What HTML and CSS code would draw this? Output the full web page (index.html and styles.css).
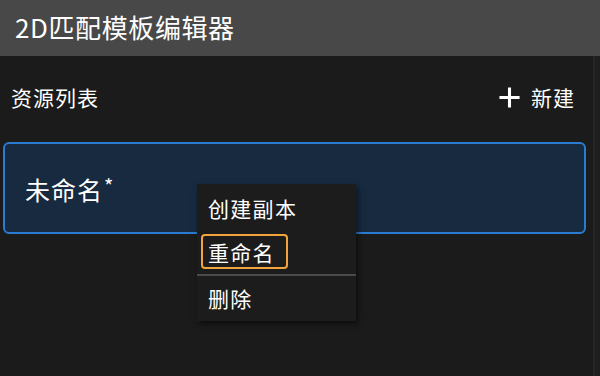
FILE: index.html
```html
<!DOCTYPE html>
<html lang="zh-CN">
<head>
<meta charset="utf-8">
<title>2D匹配模板编辑器</title>
<link rel="stylesheet" href="styles.css">
</head>
<body>
<div class="app">
  <header class="titlebar">2D匹配模板编辑器</header>
  <div class="content">
    <main class="panel">
      <div class="panel-head">
        <span class="panel-title">资源列表</span>
        <div class="new-btn">
          <svg class="plus" viewBox="0 0 24 24" width="23" height="23" aria-hidden="true">
            <path d="M12 1.5v21M1.5 12h21" stroke="#ffffff" stroke-width="3.2" fill="none"/>
          </svg>
          <span>新建</span>
        </div>
      </div>
      <div class="list">
        <div class="item selected">未命名<span class="star">*</span></div>
      </div>
    </main>
    <div class="scrollbar"></div>
  </div>
  <div class="menu">
    <div class="menu-item">创建副本</div>
    <div class="menu-item focused"><span class="focus-box">重命名</span></div>
    <div class="menu-sep"></div>
    <div class="menu-item">删除</div>
  </div>
</div>
</body>
</html>
```
FILE: styles.css
```css
html, body {
  margin: 0;
  padding: 0;
  background: #1b1b1b;
}
body {
  width: 600px;
  height: 376px;
  overflow: hidden;
  font-family: "Noto Sans CJK SC", "Noto Sans", sans-serif;
  color: #ffffff;
}
.app {
  position: relative;
  width: 600px;
  height: 376px;
  display: flex;
  flex-direction: column;
}
.titlebar {
  height: 56px;
  line-height: 54px;
  background: #484848;
  padding-left: 15px;
  font-size: 26px;
  letter-spacing: 0.6px;
  color: #ffffff;
  flex: none;
}
.content {
  flex: 1;
  display: flex;
}
.panel {
  width: 593px;
  display: flex;
  flex-direction: column;
}
.scrollbar {
  flex: 1;
  border-left: 2px solid #262626;
  background: #1e1e1e;
}
.panel-head {
  height: 82px;
  display: flex;
  align-items: center;
  justify-content: space-between;
  padding: 0 18px 0 11px;
}
.panel-title {
  font-size: 21px;
  letter-spacing: 1px;
}
.new-btn {
  display: flex;
  align-items: center;
  gap: 10px;
  font-size: 21px;
  letter-spacing: 1px;
}
.plus {
  display: block;
}
.list {
  padding: 4px 7px 0 3px;
}
.item {
  height: 88px;
  display: flex;
  align-items: center;
  padding: 2px 0 0 20px;
  box-sizing: border-box;
  font-size: 25px;
  letter-spacing: 1px;
}
.star {
  font-size: 20px;
  align-self: center;
  margin-top: -8px;
  margin-left: 1px;
}
.item.selected {
  height: 92px;
  border: 2px solid #2a7cd2;
  border-radius: 6px;
  background: #172a40;
}
.menu {
  position: absolute;
  left: 197px;
  top: 184px;
  width: 159px;
  padding: 2px 0 1px;
  background: #1c1c1c;
  box-shadow: 2px 3px 6px rgba(0, 0, 0, 0.55);
  box-sizing: border-box;
}
.menu-item {
  height: 44px;
  display: flex;
  align-items: center;
  padding-left: 11px;
  font-size: 21px;
  letter-spacing: 1.3px;
}
.menu-item.focused {
  padding-left: 4px;
}
.focus-box {
  display: flex;
  align-items: center;
  box-sizing: border-box;
  width: 87px;
  height: 35px;
  margin-top: -1px;
  padding-left: 5px;
  border: 2.5px solid #f2a43c;
  border-radius: 4px;
}
.menu-sep {
  height: 2px;
  background: #4a4a4a;
}
```
